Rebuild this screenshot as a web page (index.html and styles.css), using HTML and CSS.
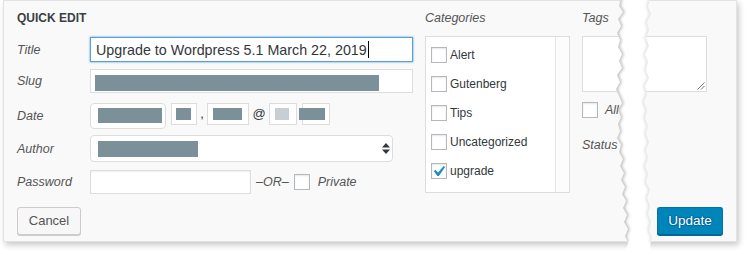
FILE: index.html
```html
<!DOCTYPE html>
<html lang="en">
<head>
<meta charset="utf-8">
<title>Quick Edit</title>
<link rel="stylesheet" href="styles.css">
</head>
<body>
<div class="stage">
  <div class="panel">
    <div class="cols">
      <div class="col-main">
        <h2 class="heading">Quick Edit</h2>
        <div class="row row-title">
          <span class="lbl">Title</span>
          <div class="input title-input"><span class="val">Upgrade to Wordpress 5.1 March 22, 2019</span><span class="caret"></span></div>
        </div>
        <div class="row row-slug">
          <span class="lbl">Slug</span>
          <div class="input slug-input"><span class="redact r-slug"></span></div>
        </div>
        <div class="row row-date">
          <span class="lbl">Date</span>
          <div class="date">
            <div class="sel sel-mm"><span class="redact r-mm"></span></div>
            <div class="input box box-jj"><span class="redact r-jj"></span></div>
            <span class="sep">,</span>
            <div class="input box box-aa"><span class="redact r-aa"></span></div>
            <span class="sep sep-at">@</span>
            <div class="input box box-hh"><span class="redact light r-hh"></span></div>
            <div class="input box box-mn"><span class="redact r-mn"></span></div>
          </div>
        </div>
        <div class="row row-author">
          <span class="lbl">Author</span>
          <div class="sel sel-author">
            <span class="redact r-author"></span>
            <svg class="arrows" width="8" height="11" viewBox="0 0 8 11"><polygon points="0,4.5 4,0 8,4.5" fill="#32373c"/><polygon points="0,6.5 8,6.5 4,11" fill="#32373c"/></svg>
          </div>
        </div>
        <div class="row row-pass">
          <span class="lbl">Password</span>
          <div class="input pass-input"></div>
          <span class="or">&ndash;OR&ndash;</span>
          <span class="cb cb-private"></span>
          <span class="private">Private</span>
        </div>
      </div>

      <div class="col-cats">
        <div class="col-title">Categories</div>
        <div class="catbox">
          <ul class="catlist">
            <li><span class="cb"></span><span class="cat">Alert</span></li>
            <li><span class="cb"></span><span class="cat">Gutenberg</span></li>
            <li><span class="cb"></span><span class="cat">Tips</span></li>
            <li><span class="cb"></span><span class="cat">Uncategorized</span></li>
            <li><span class="cb checked"><svg width="14" height="14" viewBox="4 3 13 13"><path d="M14.83 4.89l1.34.94-5.81 8.38H9.02L5.78 9.67l1.34-1.25 2.57 2.4z" fill="#1e8cbe"/></svg></span><span class="cat">upgrade</span></li>
          </ul>
          <div class="track"></div>
        </div>
      </div>

      <div class="col-tags">
        <div class="col-title">Tags</div>
        <div class="tagarea">
          <svg width="8" height="8" viewBox="0 0 8 8"><path d="M7.5 0.5 L0.5 7.5 M7.5 4 L4 7.5" stroke="#777" stroke-width="1" fill="none"/></svg>
        </div>
        <div class="pings"><span class="cb"></span><span class="pings-lbl">Allow</span></div>
        <div class="status">Status</div>
      </div>
    </div>
    <div class="footer">
      <button class="btn cancel" type="button">Cancel</button>
      <button class="btn update" type="button">Update</button>
    </div>
  </div>

  <svg class="tear" width="56" height="253" viewBox="606 0 56 253">
    <defs>
      <clipPath id="gap">
        <polygon points="621,-2 619,6 623,12 618,19 621,26 617,33 620,40 618,47 622,54 619,61 622,68 617,75 620,82 616,89 619,96 622,103 618,110 621,117 618,124 620,131 617,138 621,145 619,152 623,159 620,166 624,173 621,180 625,187 622,194 626,201 623,208 627,215 624,222 628,229 625,236 628,243 626,250 627,255 653,255 650,246 652,238 649,230 651,222 648,214 650,206 647,198 650,190 646,182 648,174 645,166 648,158 646,150 649,142 646,134 648,126 645,118 647,110 644,102 647,94 645,86 649,78 646,70 648,62 645,54 649,46 646,38 649,30 647,22 651,14 648,7 650,-2"/>
      </clipPath>
      <filter id="soft" x="-50%" y="-10%" width="200%" height="120%">
        <feGaussianBlur stdDeviation="1.6"/>
      </filter>
    </defs>
    <polygon fill="#ffffff" points="621,-2 619,6 623,12 618,19 621,26 617,33 620,40 618,47 622,54 619,61 622,68 617,75 620,82 616,89 619,96 622,103 618,110 621,117 618,124 620,131 617,138 621,145 619,152 623,159 620,166 624,173 621,180 625,187 622,194 626,201 623,208 627,215 624,222 628,229 625,236 628,243 626,250 627,255 653,255 650,246 652,238 649,230 651,222 648,214 650,206 647,198 650,190 646,182 648,174 645,166 648,158 646,150 649,142 646,134 648,126 645,118 647,110 644,102 647,94 645,86 649,78 646,70 648,62 645,54 649,46 646,38 649,30 647,22 651,14 648,7 650,-2"/>
    <g clip-path="url(#gap)">
      <polyline fill="none" stroke="rgba(0,0,0,0.28)" stroke-width="3" filter="url(#soft)" points="621,-2 619,6 623,12 618,19 621,26 617,33 620,40 618,47 622,54 619,61 622,68 617,75 620,82 616,89 619,96 622,103 618,110 621,117 618,124 620,131 617,138 621,145 619,152 623,159 620,166 624,173 621,180 625,187 622,194 626,201 623,208 627,215 624,222 628,229 625,236 627,242"/>
      <polyline fill="none" stroke="rgba(0,0,0,0.13)" stroke-width="3" filter="url(#soft)" points="650,-2 648,7 651,14 647,22 649,30 646,38 649,46 645,54 648,62 646,70 649,78 645,86 647,94 644,102 647,110 645,118 648,126 646,134 649,142 646,150 648,158 645,166 648,174 646,182 650,190 647,198 650,206 648,214 651,222 649,230 652,238 651,243"/>
    </g>
  </svg>
</div>
</body>
</html>
```

FILE: styles.css
```css
* { box-sizing: border-box; }

html, body {
  margin: 0;
  padding: 0;
  background: #ffffff;
}

body {
  font-family: "Liberation Sans", Arial, sans-serif;
  color: #32373c;
}

.stage {
  position: relative;
  width: 751px;
  height: 253px;
  overflow: hidden;
}

.panel {
  margin-left: 3px;
  width: 734px;
  background: #f9f9f9;
  border: 1px solid #e2e2e2;
  padding: 9px 13px 6px;
  box-shadow: 2px 3px 6px rgba(0, 0, 0, 0.22);
}

.cols {
  display: flex;
  align-items: flex-start;
  gap: 12px;
}

.col-main {
  width: 396px;
  flex: none;
}

.heading {
  margin: 0 0 11px;
  font-size: 12px;
  font-weight: bold;
  line-height: 16px;
  text-transform: uppercase;
  color: #3a3f44;
}

.row {
  display: flex;
  align-items: center;
}

.lbl {
  width: 73px;
  flex: none;
  font-style: italic;
  font-size: 12.5px;
  color: #555;
}

.input {
  background: #fff;
  border: 1px solid #ddd;
  box-shadow: inset 0 1px 2px rgba(0, 0, 0, 0.07);
}

.redact {
  display: block;
  background: #7b9099;
  flex: none;
}

.redact.light { background: #c7cfd4; }

/* title */
.row-title { height: 25px; }
.title-input {
  width: 323px;
  height: 25px;
  display: flex;
  align-items: center;
  padding-left: 5px;
  border-color: #5b9dd9;
  box-shadow: 0 0 2px rgba(30, 140, 190, 0.8);
  font-size: 14.3px;
  color: #32373c;
}
.caret {
  width: 1px;
  height: 17px;
  margin-left: 1px;
  background: #000;
}

/* slug */
.row-slug { height: 24px; margin-top: 7px; }
.slug-input {
  width: 323px;
  height: 24px;
  padding: 5px 0 0 4px;
  box-shadow: none;
}
.r-slug { width: 284px; height: 16px; }

/* date */
.row-date { height: 26px; margin-top: 10px; }
.date {
  display: flex;
  align-items: flex-start;
  height: 26px;
}
.sel {
  background: #fff;
  border: 1px solid #ddd;
  border-radius: 4px;
}
.sel-mm {
  width: 76px;
  height: 26px;
  padding: 4px 0 0 7px;
}
.r-mm { width: 64px; height: 15px; }
.box {
  height: 22px;
  padding: 4px 0 0 4px;
  box-shadow: none;
}
.box-jj { width: 26px; margin-left: 5px; }
.r-jj { width: 15px; height: 12px; }
.sep {
  width: 10px;
  text-align: center;
  font-size: 13px;
  line-height: 22px;
  color: #32373c;
}
.box-aa { width: 42px; padding-left: 5px; }
.r-aa { width: 29px; height: 12px; }
.sep-at { width: 20px; }
.box-hh { width: 28px; padding-left: 5px; }
.r-hh { width: 14px; height: 12px; }
.box-mn { width: 28px; margin-left: 5px; padding-left: 0; }
.r-mn { width: 26px; height: 12px; margin-left: -4px; }

/* author */
.row-author { height: 27px; margin-top: 6px; }
.sel-author {
  width: 303px;
  height: 27px;
  display: flex;
  align-items: center;
  padding: 0 2px 0 7px;
}
.r-author { width: 100px; height: 16px; }
.arrows { margin-left: auto; flex: none; }

/* password */
.row-pass { height: 24px; margin-top: 8px; }
.pass-input { width: 161px; height: 24px; }
.or {
  margin-left: 5px;
  font-style: italic;
  font-size: 12.5px;
  color: #555;
}
.cb {
  display: inline-flex;
  align-items: center;
  justify-content: center;
  width: 16px;
  height: 16px;
  flex: none;
  background: #fff;
  border: 1px solid #b4b9be;
  box-shadow: inset 0 1px 2px rgba(0, 0, 0, 0.1);
}
.cb-private { margin-left: 5px; }
.private {
  margin-left: 8px;
  font-style: italic;
  font-size: 12.5px;
  color: #555;
}

/* categories */
.col-cats {
  width: 145px;
  flex: none;
}
.col-title {
  font-style: italic;
  font-size: 12.5px;
  line-height: 16px;
  color: #555;
}
.catbox {
  margin-top: 10px;
  height: 157px;
  display: flex;
  background: #fff;
  border: 1px solid #ddd;
}
.catlist {
  flex: 1;
  list-style: none;
  margin: 0;
  padding: 10px 0 0 5px;
}
.catlist li {
  display: flex;
  align-items: center;
  height: 16px;
  margin-bottom: 13px;
}
.cat {
  margin-left: 3px;
  font-size: 12px;
  color: #32373c;
}
.track {
  width: 14px;
  border-left: 1px solid #e5e5e5;
  background: #fcfcfc;
}

/* tags */
.col-tags {
  flex: 1;
}
.tagarea {
  margin-top: 10px;
  width: 125px;
  height: 56px;
  background: #fff;
  border: 1px solid #ddd;
  display: flex;
  justify-content: flex-end;
  align-items: flex-end;
  padding: 0 1px 1px 0;
}
.pings {
  margin-top: 10px;
  display: flex;
  align-items: center;
  height: 16px;
}
.pings-lbl {
  margin-left: 7px;
  font-style: italic;
  font-size: 12.5px;
  color: #555;
  white-space: nowrap;
}
.status {
  margin-top: 19px;
  font-style: italic;
  font-size: 12.5px;
  line-height: 16px;
  color: #555;
}

/* footer */
.footer {
  display: flex;
  justify-content: space-between;
  margin-top: 13px;
}
.btn {
  height: 28px;
  margin: 0;
  padding: 0;
  font-family: "Liberation Sans", Arial, sans-serif;
  font-size: 13px;
  line-height: 26px;
  border-radius: 3px;
  text-align: center;
  cursor: pointer;
}
.cancel {
  width: 64px;
  background: #f7f7f7;
  border: 1px solid #ccc;
  box-shadow: 0 1px 0 #ccc;
  color: #555;
}
.update {
  width: 66px;
  background: #0085ba;
  border: 1px solid #0073aa;
  border-bottom-color: #006799;
  box-shadow: 0 1px 0 #006799;
  color: #fff;
  font-size: 13.5px;
  text-shadow: 0 -1px 1px #006799, 1px 0 1px #006799, 0 1px 1px #006799, -1px 0 1px #006799;
}

/* torn paper strip lying over the panel */
.tear {
  position: absolute;
  left: 606px;
  top: 0;
}
```
